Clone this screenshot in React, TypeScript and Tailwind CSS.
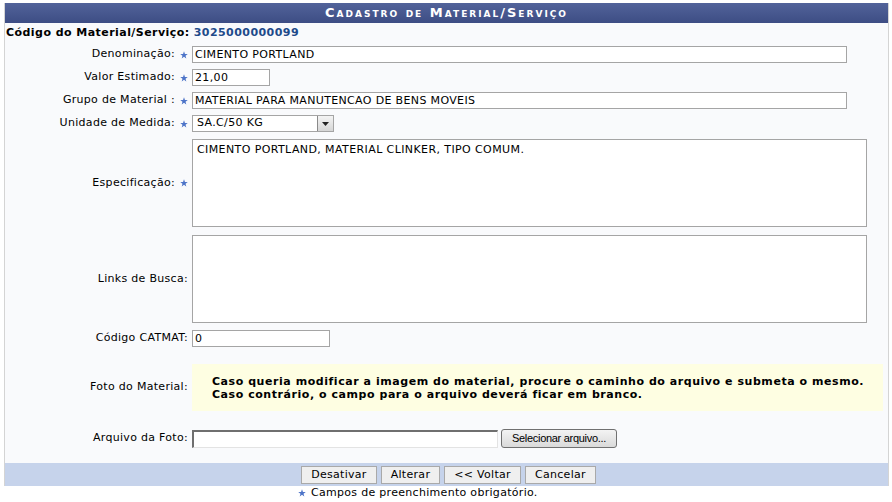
import React from "react";

const FONT = "font-['Verdana','DejaVu_Sans',sans-serif]";

function Star() {
  return (
    <svg width="8" height="8" viewBox="0 0 10 10" className="inline-block shrink-0">
      <path
        d="M5 0.3 L6.2 3.6 L9.7 3.7 L6.9 5.8 L7.9 9.3 L5 7.3 L2.1 9.3 L3.1 5.8 L0.3 3.7 L3.8 3.6 Z"
        fill="#4d74c8"
      />
    </svg>
  );
}

function Row({
  label,
  required,
  className = "py-[3px]",
  children,
}: {
  label: string;
  required?: boolean;
  className?: string;
  children: React.ReactNode;
}) {
  return (
    <div className={`flex items-center ${className}`}>
      <div className="w-[184px] shrink-0 flex items-center justify-end gap-[5px] pr-[1px] text-[11px] tracking-[0.3px] text-black">
        <span>{label}</span>
        {required && <Star />}
      </div>
      <div className="ml-[3px] flex items-center min-w-0">{children}</div>
    </div>
  );
}

function TextInput({ value, width }: { value: string; width: string }) {
  return (
    <div
      className={`${width} h-[17px] border border-[#a5a5a5] bg-white pl-[2px] text-[11px] leading-[15px] tracking-[0.35px] text-black whitespace-nowrap overflow-hidden`}
    >
      {value}
    </div>
  );
}

function TextArea({ value }: { value?: string }) {
  return (
    <div className="w-[675px] h-[88px] border border-[#a5a5a5] bg-white px-[4px] pt-[3px] text-[11px] leading-[14px] tracking-[0.4px] text-black">
      {value}
    </div>
  );
}

function FooterButton({ children }: { children: React.ReactNode }) {
  return (
    <button className="h-[18px] border border-[#a9a9a9] bg-[#efefef] px-[9px] text-[11px] leading-[16px] tracking-[0.3px] text-black">
      {children}
    </button>
  );
}

export default function App() {
  return (
    <div className={`${FONT} bg-white w-[892px] h-[502px] pt-[3px] overflow-hidden`}>
      <div className="ml-[4px] w-[885px] border-x border-[#d4d4d4]">
        {/* Caption */}
        <div className="h-[20px] bg-gradient-to-b from-[#52639a] to-[#3d4d84] flex items-center justify-center text-white font-bold text-[13px] tracking-[2px] [font-variant:small-caps]">
          Cadastro de Material/Serviço
        </div>

        {/* Body */}
        <div className="bg-[#f9fafc]">
          <div className="h-[20px] flex items-center pl-[1px] text-[11px] font-bold tracking-[0.45px]">
            <span className="text-black">Código do Material/Serviço:</span>
            <span className="ml-[4px] text-[#1e4a8a]">3025000000099</span>
          </div>

          <Row label="Denominação:" required>
            <TextInput value="CIMENTO PORTLAND" width="w-[655px]" />
          </Row>
          <Row label="Valor Estimado:" required>
            <TextInput value="21,00" width="w-[78px]" />
          </Row>
          <Row label="Grupo de Material :" required>
            <TextInput value="MATERIAL PARA MANUTENCAO DE BENS MOVEIS" width="w-[655px]" />
          </Row>
          <Row label="Unidade de Medida:" required>
            <div className="w-[142px] h-[17px] border border-[#a5a5a5] bg-white flex items-center">
              <span className="flex-1 pl-[4px] text-[11px] tracking-[0.35px] text-black">SA.C/50 KG</span>
              <div className="w-[16px] h-[15px] bg-gradient-to-b from-[#f4f4f4] to-[#d6d6d6] border-l border-[#8a8a8a] flex items-center justify-center">
                <svg width="7" height="4" viewBox="0 0 7 4">
                  <path d="M0 0 H7 L3.5 4 Z" fill="#222" />
                </svg>
              </div>
            </div>
          </Row>
          <Row label="Especificação:" required className="pt-[4px] pb-[4px]">
            <TextArea value="CIMENTO PORTLAND, MATERIAL CLINKER, TIPO COMUM." />
          </Row>
          <Row label="Links de Busca:" className="pt-[4px] pb-[4px]">
            <TextArea />
          </Row>
          <Row label="Código CATMAT:">
            <TextInput value="0" width="w-[138px]" />
          </Row>
          <Row label="Foto do Material:" className="pt-[14px] pb-[15px]">
            <div className="w-[691px] h-[47px] bg-[#fefee2] pl-[20px] flex flex-col justify-center text-[11px] leading-[13px] font-bold tracking-[0.55px] text-black">
              <span>Caso queria modificar a imagem do material, procure o caminho do arquivo e submeta o mesmo.</span>
              <span>Caso contrário, o campo para o arquivo deverá ficar em branco.</span>
            </div>
          </Row>
          <Row label="Arquivo da Foto:" className="pt-[3px] pb-[15px]">
            <div className="w-[306px] h-[18px] bg-white border-t-2 border-l-2 border-[#6f6f6f] border-b border-r border-b-[#e3e3e3] border-r-[#e3e3e3]" />
            <button className="ml-[3px] w-[116px] h-[19px] rounded-[3px] border border-[#707070] bg-gradient-to-b from-[#f3f3f3] to-[#dadada] font-['Liberation_Sans',Arial,sans-serif] text-[11px] tracking-[-0.3px] text-black">
              Selecionar arquivo...
            </button>
          </Row>
        </div>

        {/* Footer */}
        <div className="h-[23px] bg-[#c6d3eb] flex items-center justify-center gap-[4px] pl-[4px]">
          <FooterButton>Desativar</FooterButton>
          <FooterButton>Alterar</FooterButton>
          <FooterButton>&lt;&lt; Voltar</FooterButton>
          <FooterButton>Cancelar</FooterButton>
        </div>
      </div>

      <div className="pl-[298px] flex items-center gap-[5px] text-[11px] leading-[13px] tracking-[0.3px] text-black">
        <Star />
        <span>Campos de preenchimento obrigatório.</span>
      </div>
    </div>
  );
}
